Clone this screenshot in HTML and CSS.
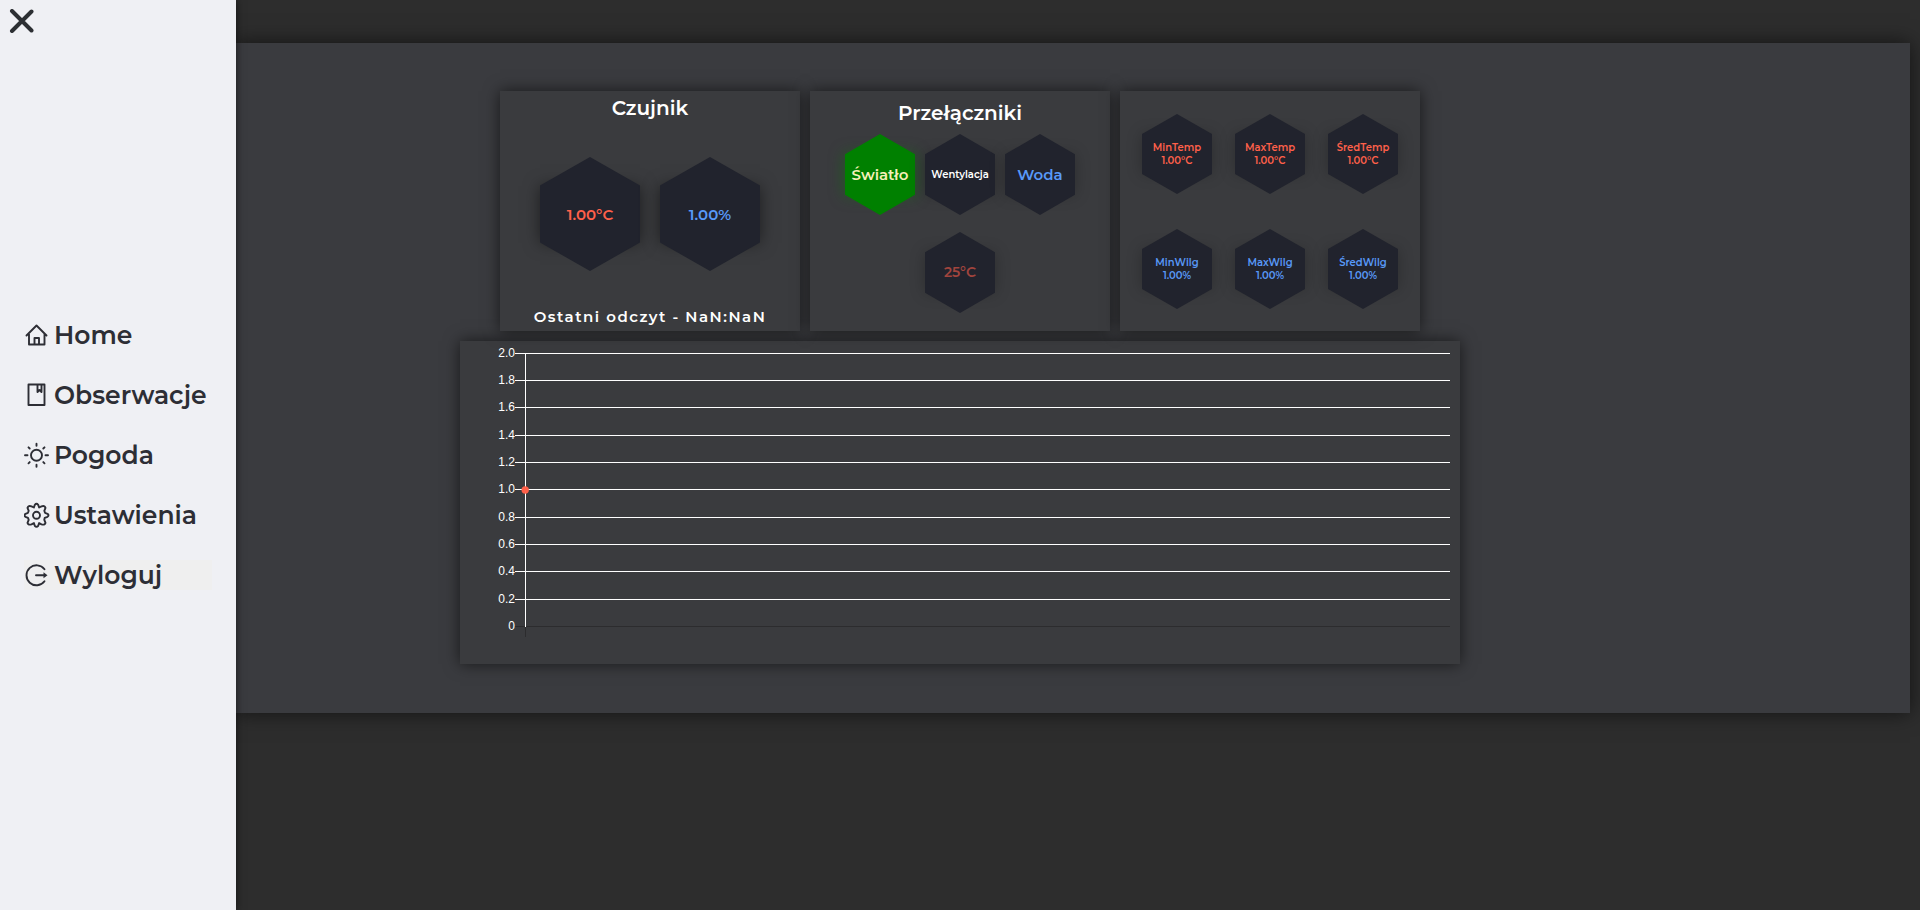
FILE: index.html
```html
<!DOCTYPE html>
<html lang="pl">
<head>
<meta charset="utf-8">
<title>Home</title>
<link rel="stylesheet" href="styles.css">
</head>
<body>
<nav class="sidebar">
  <svg class="close" viewBox="0 0 24 24"><path d="M2.500 2 22 21.500M22 2.500 2.500 22"/></svg>
  <ul class="menu">
    <li><svg class="icon" viewBox="0 0 26 26"><path d="M2.500 13.500 12.500 3.500l10 10M5 12V22.500H20.500V12M10.500 22.500v-6.500h4.500v6.500"/></svg><span>Home</span></li>
    <li><svg class="icon" viewBox="0 0 26 26"><path d="M4.500 2.500H20.500V23H4.500ZM13.500 2.500v7.500l2-2 2 2v-7.500"/></svg><span>Obserwacje</span></li>
    <li><svg class="icon" viewBox="0 0 26 26"><circle cx="12.500" cy="13.300" r="5.500"/><path d="M12.500 1.800v2M12.500 22.800v2M1 13.300h2.500M21.500 13.300h2.500M4.500 5.300l1.200 1.200M19.300 20.100l1.200 1.200M4.500 21.300l1.200-1.200M19.300 6.500l1.200-1.200"/></svg><span>Pogoda</span></li>
    <li><svg class="icon" viewBox="0 0 26 26"><g transform="translate(-.5 .3)"><circle cx="13" cy="13" r="3.500"/><path d="M11.300 2.500Q13 .500 14.700 2.500L15.600 5.200 18 4Q21 2.800 22 5.500L20.800 8.500 21.500 10.500 24 11.500Q26 13 24 14.500L21.200 15.600 20.800 17.500 22 20.500Q21 23.200 18 22L15.600 20.800 14.700 23.500Q13 25.500 11.300 23.500L10.400 20.800 8 22Q5 23.200 4 20.500L5.200 17.500 4.500 15.600 2 14.500Q0 13 2 11.500L4.500 10.500 5.200 8.500 4 5.500Q5 2.800 8 4L10.400 5.200Z"/></g></svg><span>Ustawienia</span></li>
    <li class="logout"><svg class="icon" viewBox="0 0 26 26"><path d="M20.500 7.300A10 10 0 1 0 20.500 19.300M12 13.300h9"/><path class="fill" d="M19.500 10.300 23.500 13.300l-4 3Z"/></svg><span>Wyloguj</span></li>
  </ul>
</nav>
<main class="page">
  <div class="panel">
    <div class="cards">
      <section class="card">
        <h2 class="title t-sensor">Czujnik</h2>
        <div class="sensors">
          <div class="hex big red">1.00°C</div>
          <div class="hex big blue">1.00%</div>
        </div>
        <p class="last">Ostatni odczyt - NaN:NaN</p>
      </section>
      <section class="card">
        <h2 class="title t-switch">Przełączniki</h2>
        <div class="switches">
          <div class="hex on">Światło</div>
          <div class="hex fan">Wentylacja</div>
          <div class="hex blue">Woda</div>
          <div class="hex target">25°C</div>
        </div>
      </section>
      <section class="card stats">
        <div class="hex small red">MinTemp<br>1.00°C</div>
        <div class="hex small red">MaxTemp<br>1.00°C</div>
        <div class="hex small red">ŚredTemp<br>1.00°C</div>
        <div class="hex small blue">MinWilg<br>1.00%</div>
        <div class="hex small blue">MaxWilg<br>1.00%</div>
        <div class="hex small blue">ŚredWilg<br>1.00%</div>
      </section>
    </div>
    <section class="chart">
      <svg width="1000" height="323" viewBox="0 0 1000 323">
        <path class="grid" d="M55 12.500H990M55 39.500H990M55 66.500H990M55 94.500H990M55 121.500H990M55 148.500H990M55 176.500H990M55 203.500H990M55 230.500H990M55 258.500H990"/>
        <path class="zero" d="M55 285.500H990M65.500 286V296"/>
        <path class="grid" d="M65.500 12V286"/>
        <circle class="dot" cx="65.200" cy="149" r="3.700"/>
        <g class="labels">
          <text x="55" y="16">2.0</text><text x="55" y="43">1.8</text><text x="55" y="70">1.6</text><text x="55" y="98">1.4</text><text x="55" y="125">1.2</text><text x="55" y="152">1.0</text><text x="55" y="180">0.8</text><text x="55" y="207">0.6</text><text x="55" y="234">0.4</text><text x="55" y="262">0.2</text><text x="55" y="289">0</text>
        </g>
      </svg>
    </section>
  </div>
</main>
</body>
</html>
```
FILE: styles.css
```css
* { box-sizing: border-box; }
body {
  margin: 0;
  height: 910px;
  display: flex;
  overflow: hidden;
  background: #2d2d2d;
  color: #fff;
  font-family: Montserrat, Inter, "Open Sans", sans-serif;
  font-weight: 600;
}
.sidebar {
  position: relative;
  z-index: 1;
  width: 236px;
  flex: none;
  padding: 9px;
  background: #eff0f4;
  color: #2d2e35;
  box-shadow: 0 0 8px rgba(0, 0, 0, .6);
}
.close { display: block; width: 25px; height: 24px; fill: none; stroke: #2c2f33; stroke-width: 4; stroke-linecap: round; }
.menu { list-style: none; margin: 287px 0 0 15px; padding: 0; font-size: 25px; line-height: 30px; }
.menu li { width: 188px; height: 30px; margin-bottom: 30px; display: flex; align-items: center; gap: 4px; white-space: nowrap; }
.menu .logout { background: #efefef; }
.icon { width: 26px; height: 26px; flex: none; fill: none; stroke: #2d2e35; stroke-width: 1.9; stroke-linecap: round; stroke-linejoin: round; }
.icon .fill { fill: #2d2e35; stroke: none; }
.page { flex: 1; padding: 43px 10px 0 0; }
.panel { height: 670px; padding: 48px 450px 0 224px; background: #3a3b3f; box-shadow: 0 0 20px rgba(0, 0, 0, .6); }
.cards { display: flex; gap: 10px; padding: 0 40px; }
.card { width: 300px; height: 240px; flex: none; background: #3a3b3e; box-shadow: 0 0 15px rgba(0, 0, 0, .6); text-align: center; }
.title { margin: 0; font-size: 20px; line-height: 24px; font-weight: 600; }
.t-sensor { padding-top: 5px; }
.t-switch { padding-top: 10px; }
.sensors { display: flex; justify-content: center; gap: 20px; padding-top: 37px; }
.last { margin: 37px 0 0; font-size: 15px; line-height: 18px; letter-spacing: 1.5px; }
.hex {
  position: relative;
  z-index: 0;
  width: 70px;
  height: 81px;
  display: flex;
  align-items: center;
  justify-content: center;
  white-space: nowrap;
  font-size: 15px;
  --fill: #21232d;
}
.hex::before { content: ""; position: absolute; z-index: -2; inset: 25% 0; box-shadow: 0 0 15px rgba(0, 0, 0, .25); }
.hex::after { content: ""; position: absolute; z-index: -1; inset: 0; background: var(--fill); clip-path: polygon(50% 0, 100% 25%, 100% 75%, 50% 100%, 0 75%, 0 25%); }
.big { width: 100px; height: 114px; }
.big::before { box-shadow: 0 0 15px rgba(0, 0, 0, .5); }
.red { color: #ff604a; }
.blue { color: #5899f8; }
.on { --fill: #008000; color: #f5f0b8; }
.on::before { box-shadow: 0 0 15px rgba(0, 128, 0, .5); }
.fan { font-size: 10px; }
.target { color: #a0443d; font-size: 14px; grid-column: 2; padding-bottom: 1px; }
.switches { display: grid; grid-template-columns: repeat(3, 70px); gap: 17px 10px; justify-content: center; padding-top: 9px; }
.stats { display: grid; grid-template-columns: repeat(3, 70px); gap: 35px 23px; justify-content: center; align-content: start; padding-top: 23px; }
.small { height: 80px; text-align: center; font-size: 10px; line-height: 13px; }
.chart { height: 323px; margin-top: 10px; background: #3a3b3e; box-shadow: 0 0 15px rgba(0, 0, 0, .6); }
.chart svg { display: block; }
.grid { fill: none; stroke: #fff; }
.zero { fill: none; stroke: #2c2c2e; }
.dot { fill: #ff604a; }
.labels { fill: #fff; font: 400 12px "Liberation Sans", sans-serif; text-anchor: end; }
```
